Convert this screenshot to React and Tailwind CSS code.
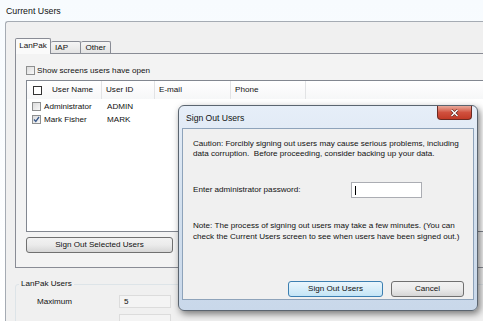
import React from 'react';

const columns = [
  { label: 'User ID', width: 'w-[53px]' },
  { label: 'E-mail', width: 'w-[76px]' },
  { label: 'Phone', width: 'w-[75px]' },
];

const users = [
  { name: 'Administrator', id: 'ADMIN', checked: false },
  { name: 'Mark Fisher', id: 'MARK', checked: true },
];

const CheckBox = ({ checked, dark }) => (
  <div
    className={`w-[9px] h-[9px] shrink-0 flex items-center justify-center border ${
      dark ? 'border-[#333] bg-white' : 'border-[#8e8f8f] bg-gradient-to-br from-[#dcdcdc] to-[#f8f8f8]'
    }`}
  >
    {checked && (
      <svg width="7" height="7" viewBox="0 0 7 7">
        <path d="M1 3.5 L2.8 5.5 L6 1" fill="none" stroke="#3a5a8c" strokeWidth="1.3" />
      </svg>
    )}
  </div>
);

const WinButton = ({ children, className = '', focused }) => (
  <div
    className={`flex items-center justify-center rounded-[3px] border ${
      focused
        ? 'border-[#3c7fb1] bg-gradient-to-b from-[#eaf6fd] to-[#c4e5f6]'
        : 'border-[#707070] bg-gradient-to-b from-[#f2f2f2] via-[#ebebeb] to-[#d6d6d6]'
    } ${className}`}
  >
    {children}
  </div>
);

export default function App() {
  return (
    <div
      className="w-[483px] h-[321px] overflow-hidden relative flex flex-col bg-gradient-to-b from-[#f7fbfe] to-white text-[8.1px] leading-[10px] text-[#111]"
      style={{ fontFamily: '"Liberation Sans", Arial, sans-serif' }}
    >
      {/* window caption */}
      <div className="h-[21px] shrink-0 pl-[6px] flex items-center text-[8.8px]">Current Users</div>

      {/* window body */}
      <div className="flex-1 ml-[5px] border-t border-l border-[#a5abb3] rounded-tl-[3px] bg-[#f0f0f0] pl-[9px] pt-[16px]">
        {/* tabs */}
        <div className="flex items-end h-[15px]">
          <div className="relative z-10 w-[36px] h-[16px] -mb-[1px] border border-b-0 border-[#898c95] rounded-t-[2px] bg-[#fafafa] flex items-center justify-center pb-[1px]">
            LanPak
          </div>
          <div className="w-[30px] h-[12px] border border-l-0 border-b-0 border-[#898c95] rounded-t-[2px] bg-gradient-to-b from-[#f5f5f5] to-[#e3e3e3] flex items-center pl-[4px]">
            IAP
          </div>
          <div className="w-[30px] h-[12px] border border-l-0 border-b-0 border-[#898c95] rounded-t-[2px] bg-gradient-to-b from-[#f5f5f5] to-[#e3e3e3] flex items-center justify-center">
            Other
          </div>
        </div>

        {/* tab panel */}
        <div className="w-[500px] h-[215px] border border-[#898c95] bg-[#f3f3f3] pl-[10px] pt-[12px]">
          <div className="flex items-center gap-[2px] h-[9px]">
            <CheckBox />
            <span>Show screens users have open</span>
          </div>

          {/* list view */}
          <div className="mt-[5px] h-[152px] border border-[#828790] bg-white">
            <div className="flex h-[18px] items-center bg-gradient-to-b from-white to-[#f6f7f8]">
              <div className="w-[75px] h-full flex items-center pl-[6px] border-r border-[#e2e3e5]">
                <CheckBox dark />
                <span className="ml-[10px]">User Name</span>
              </div>
              {columns.map((c) => (
                <div key={c.label} className={`${c.width} h-full flex items-center pl-[4px] border-r border-[#e2e3e5]`}>
                  {c.label}
                </div>
              ))}
            </div>
            <div className="pt-[1px]">
              {users.map((u) => (
                <div key={u.id} className="flex items-center h-[13px]">
                  <div className="w-[75px] flex items-center pl-[5px] gap-[3px]">
                    <CheckBox checked={u.checked} />
                    <span>{u.name}</span>
                  </div>
                  <div className="pl-[5px]">{u.id}</div>
                </div>
              ))}
            </div>
          </div>

          <WinButton className="mt-[5px] w-[147px] h-[16px]">Sign Out Selected Users</WinButton>
        </div>

        {/* group box */}
        <fieldset className="mt-[11px] w-[480px] h-[60px] border border-[#dde4e8] rounded-[3px] p-0">
          <legend className="ml-[3px] px-[2px]">LanPak Users</legend>
          <div className="pl-[21px] pt-[6px]">
            <div className="flex items-center h-[13px]">
              <span className="w-[82px]">Maximum</span>
              <div className="w-[52px] h-[13px] border border-[#dcdcdc] bg-[#f4f4f4] pl-[4px] flex items-center">5</div>
            </div>
            <div className="ml-[82px] mt-[6px] w-[52px] h-[13px] border border-[#dcdcdc] bg-[#f4f4f4]" />
          </div>
        </fieldset>
      </div>

      {/* Sign Out Users dialog */}
      <div className="absolute left-[178px] top-[105px] w-[300px] h-[206px] rounded-[6px] border border-[#5b6570] bg-gradient-to-b from-[#e6eef8] via-[#d3e0ee] to-[#c9d8ea] shadow-[2px_3px_7px_rgba(0,0,0,0.5)] px-[3px] pb-[10px] flex flex-col">
        <div className="h-[22px] flex items-start justify-between">
          <span className="pl-[4px] pt-[7px] text-[8.6px]">Sign Out Users</span>
          <div className="w-[35px] h-[14px] rounded-b-[4px] border border-t-0 border-[#6b2a22] bg-gradient-to-b from-[#e8a99b] via-[#d0503e] to-[#c13a26] flex items-center justify-center mr-[2px]">
            <svg width="9" height="8" viewBox="0 0 9 8">
              <path d="M1.5 1 L7.5 7 M7.5 1 L1.5 7" stroke="#5a2018" strokeWidth="2.6" />
              <path d="M1.5 1 L7.5 7 M7.5 1 L1.5 7" stroke="white" strokeWidth="1.5" />
            </svg>
          </div>
        </div>

        <div className="flex-1 border border-[#8ea3ba] bg-[#f0f0f0] pl-[10px] pr-[9px] pt-[10px] flex flex-col whitespace-nowrap">
          <p className="leading-[10px]">
            Caution: Forcibly signing out users may cause serious problems, including
            <br />
            data corruption.&nbsp; Before proceeding, consider backing up your data.
          </p>
          <div className="mt-[23px] flex items-center">
            <span className="w-[158px]">Enter administrator password:</span>
            <div className="w-[71px] h-[16px] border border-[#abadb3] bg-white flex items-center pl-[3px]">
              <div className="w-px h-[9px] bg-black" />
            </div>
          </div>
          <p className="mt-[22px] leading-[11px]">
            Note: The process of signing out users may take a few minutes. (You can
            <br />
            check the Current Users screen to see when users have been signed out.)
          </p>
          <div className="mt-auto mb-[2px] flex justify-end gap-[8px]">
            <WinButton focused className="w-[95px] h-[16px]">Sign Out Users</WinButton>
            <WinButton className="w-[73px] h-[16px]">Cancel</WinButton>
          </div>
        </div>
      </div>
    </div>
  );
}
